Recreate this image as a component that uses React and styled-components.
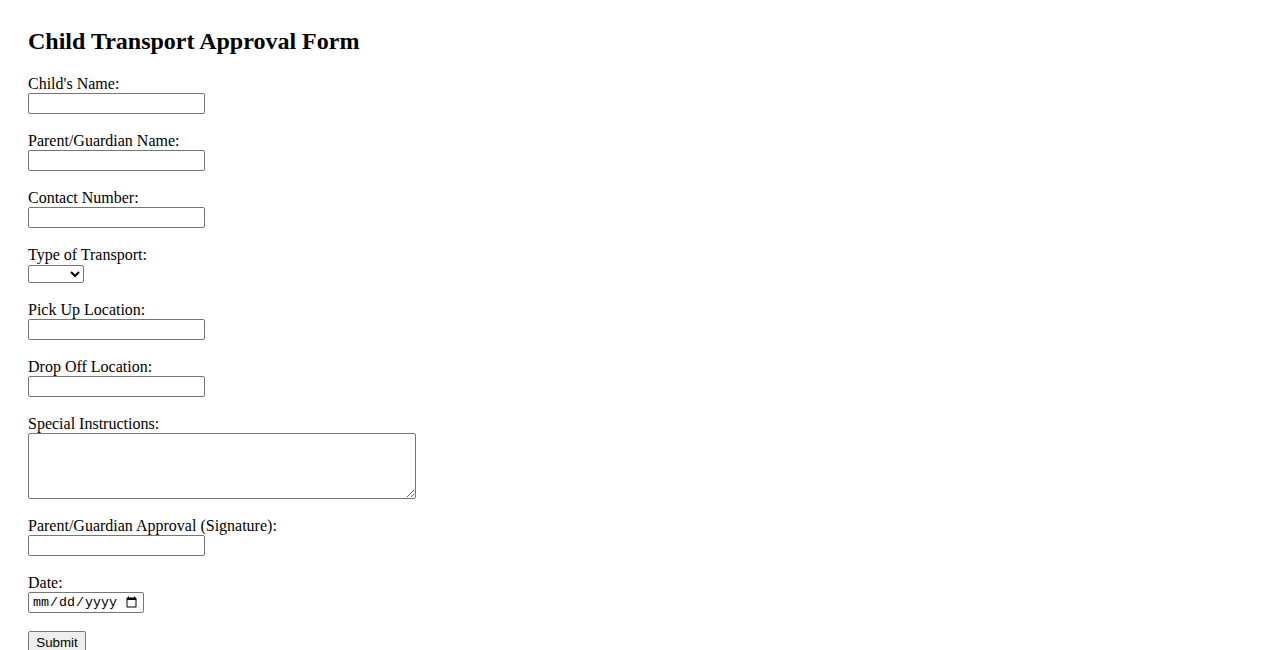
import React from "react";
import styled, { createGlobalStyle } from "styled-components";

const Global = createGlobalStyle`
  html, body { margin: 0; padding: 0; background: #fff; }
  body { font-family: "Liberation Serif", "Times New Roman", serif; color: #000; }
`;

const Page = styled.div`
  padding: 28px;
`;

const Title = styled.h2`
  margin: 0 0 22px;
  font-size: 24px;
  line-height: 26px;
  font-weight: bold;
`;

const Form = styled.form`
  display: flex;
  flex-direction: column;
  align-items: flex-start;
`;

const Field = styled.div`
  display: flex;
  flex-direction: column;
  align-items: flex-start;
  margin-bottom: ${(p) => p.$gap}px;
`;

const Label = styled.label`
  font-size: 16px;
  line-height: 16px;
  height: 17px;
`;

const controlBase = `
  box-sizing: border-box;
  margin: 0;
  font-family: "Liberation Sans", Arial, sans-serif;
  font-size: 13.33px;
  border: 1px solid #767676;
  border-radius: 2px;
  background: #fff;
`;

const TextInput = styled.input`
  ${controlBase}
  width: 177px;
  height: 21px;
  padding: 1px 2px;
`;

const DateInput = styled.input`
  ${controlBase}
  width: 116px;
  height: 21px;
  padding: 1px 3px;
  font-family: "Liberation Mono", "DejaVu Sans Mono", monospace;
  font-size: 13.33px;
`;

const Select = styled.select`
  ${controlBase}
  width: 56px;
  height: 18px;
  margin-top: 1px;
  padding: 0;
`;

const TextArea = styled.textarea`
  ${controlBase}
  width: 388px;
  height: 66px;
  padding: 2px;
`;

const Button = styled.button`
  box-sizing: border-box;
  margin: 0;
  width: 58px;
  height: 23px;
  font-family: "Liberation Sans", Arial, sans-serif;
  font-size: 13.33px;
  padding: 1px 7px;
  border: 1px solid #767676;
  border-radius: 2px;
  background: #efefef;
  color: #000;
`;

const fields = [
  { id: "child", label: "Child's Name:", type: "text" },
  { id: "parent", label: "Parent/Guardian Name:", type: "text" },
  { id: "contact", label: "Contact Number:", type: "tel" },
  { id: "transport", label: "Type of Transport:", type: "select" },
  { id: "pickup", label: "Pick Up Location:", type: "text" },
  { id: "dropoff", label: "Drop Off Location:", type: "text" },
  { id: "instructions", label: "Special Instructions:", type: "textarea" },
  { id: "signature", label: "Parent/Guardian Approval (Signature):", type: "text" },
  { id: "date", label: "Date:", type: "date" },
];

function Control({ f }) {
  if (f.type === "select")
    return (
      <Select id={f.id} defaultValue="">
        <option value=""></option>
        <option>Bus</option>
        <option>Car</option>
      </Select>
    );
  if (f.type === "textarea") return <TextArea id={f.id} />;
  if (f.type === "date") return <DateInput id={f.id} type="date" />;
  return <TextInput id={f.id} type={f.type} />;
}

export default function App() {
  return (
    <>
      <Global />
      <Page>
        <Title>Child Transport Approval Form</Title>
        <Form onSubmit={(e) => e.preventDefault()}>
          {fields.map((f) => (
            <Field key={f.id} $gap={f.type === "date" ? 18 : 19}>
              <Label htmlFor={f.id}>{f.label}</Label>
              <Control f={f} />
            </Field>
          ))}
          <Button type="submit">Submit</Button>
        </Form>
      </Page>
    </>
  );
}
